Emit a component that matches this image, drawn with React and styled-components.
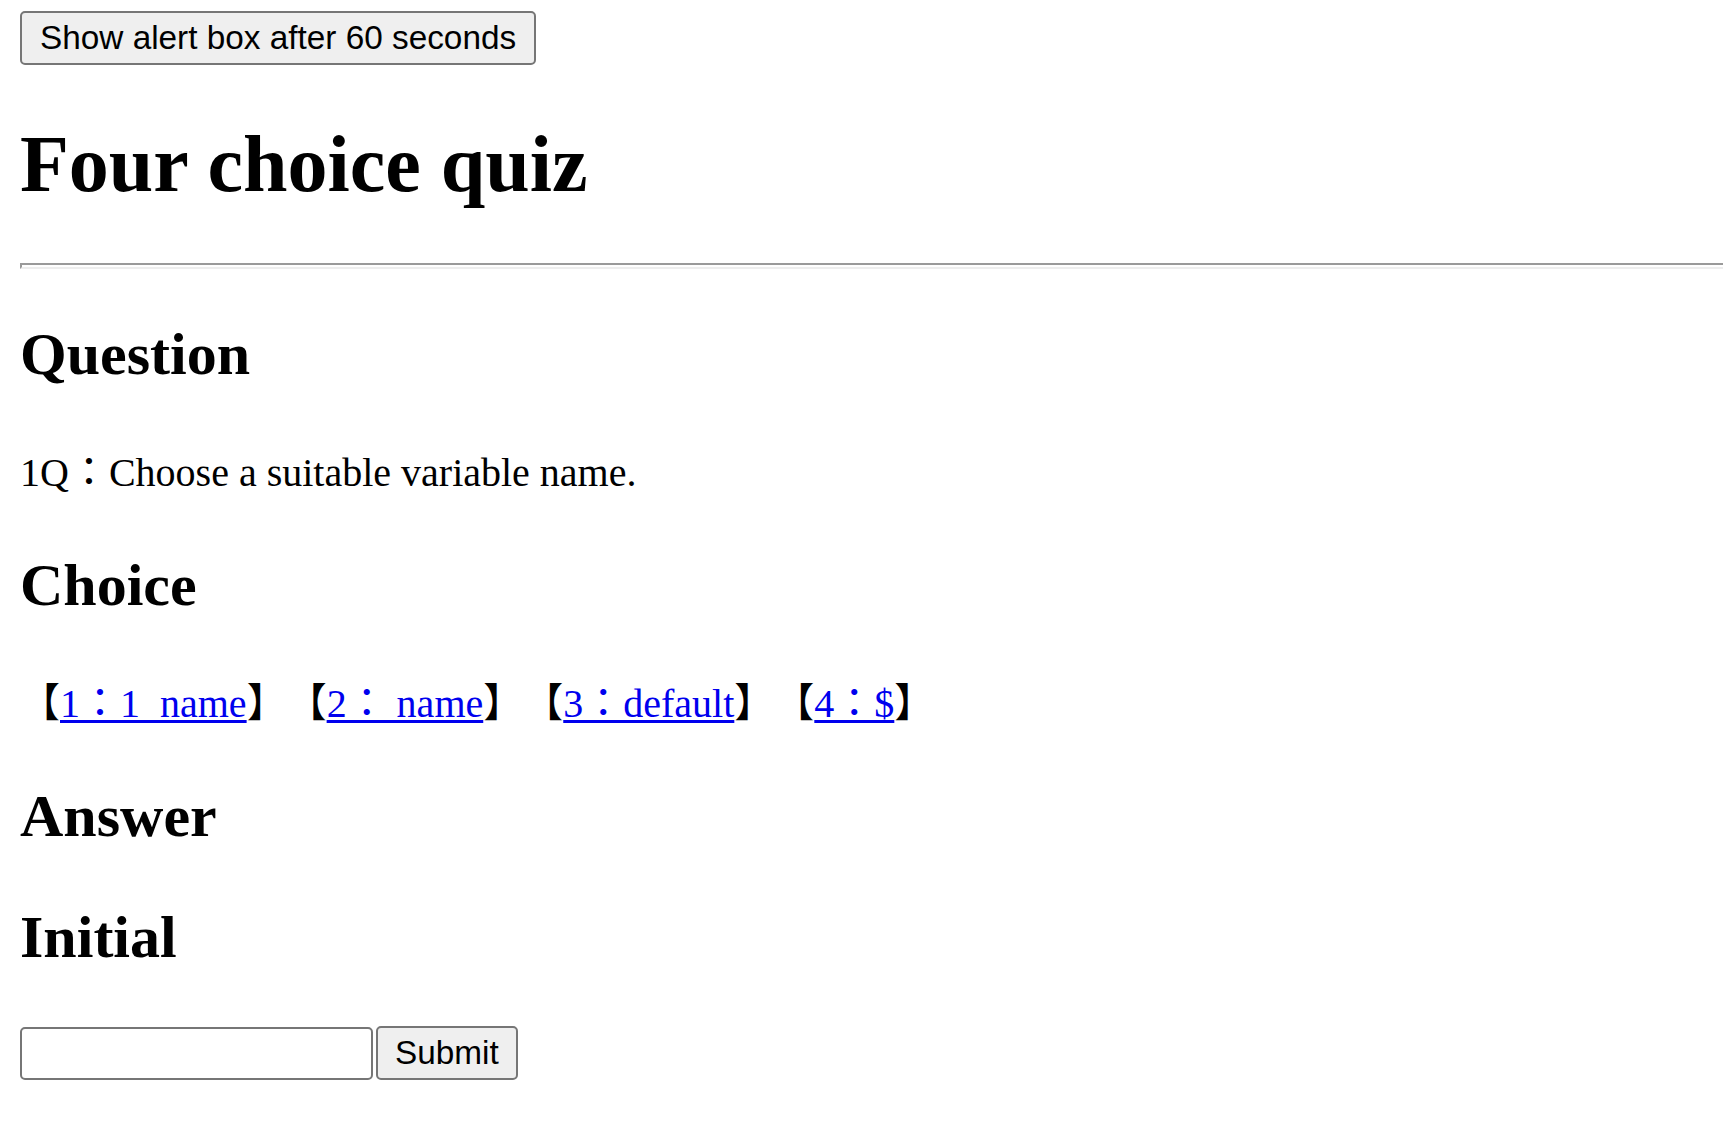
import * as React from "react"
import styled, { createGlobalStyle } from "styled-components"

const choices = [
  { id: 1, label: "1：1_name" },
  { id: 2, label: "2： name" },
  { id: 3, label: "3：default" },
  { id: 4, label: "4：$" },
]

const GlobalStyle = createGlobalStyle`
  html, body {
    margin: 0;
    padding: 0;
    background: #ffffff;
  }
  body {
    font-family: "Liberation Serif", "Noto Sans CJK JP", serif;
    color: #000000;
  }
`

const App = () => {
  const [initial, setInitial] = React.useState("")
  return (
    <>
      <GlobalStyle />
      <StPage>
        <StButton type="button" $pad={18}>
          Show alert box after 60 seconds
        </StButton>
        <StTitle>Four choice quiz</StTitle>
        <StRule />
        <StHeading>Question</StHeading>
        <StText>1Q：Choose a suitable variable name.</StText>
        <StHeading>Choice</StHeading>
        <StText>
          {choices.map(({ id, label }) => (
            <React.Fragment key={id}>
              【<StLink href={`#choice-${id}`}>{label}</StLink>】
            </React.Fragment>
          ))}
        </StText>
        <StHeading>Answer</StHeading>
        <StHeading>Initial</StHeading>
        <StForm onSubmit={e => e.preventDefault()}>
          <StInput
            type="text"
            value={initial}
            onChange={e => setInitial(e.target.value)}
          />
          <StButton type="submit" $pad={17}>
            Submit
          </StButton>
        </StForm>
      </StPage>
    </>
  )
}
export default App

const StPage = styled.div`
  padding: 11px 0 40px 20px;
`
const StButton = styled.button`
  height: 54px;
  margin: 0;
  padding: 0 ${props => props.$pad}px;
  font-family: "Liberation Sans", Arial, sans-serif;
  font-size: 33.33px;
  color: #000000;
  background-color: #efefef;
  border: 2px solid #767676;
  border-radius: 5px;
`
const StTitle = styled.h1`
  font-size: 80px;
  font-weight: bold;
  margin: 53.6px 0;
`
const StRule = styled.hr`
  height: 2px;
  margin: 20px 0;
  border-style: solid;
  border-width: 2px 0 2px 2px;
  border-color: #9a9a9a #eeeeee #eeeeee #9a9a9a;
`
const StHeading = styled.h2`
  font-size: 60px;
  font-weight: bold;
  line-height: 71px;
  margin: 49.8px 0;
`
const StText = styled.p`
  font-size: 40px;
  margin: 40px 0 52.4px;
  text-spacing-trim: space-all;
`
const StLink = styled.a`
  color: #0000ee;
  text-decoration: underline;
  text-decoration-thickness: 3px;
  text-underline-offset: 3px;
`
const StForm = styled.form`
  display: flex;
  align-items: center;
  gap: 3px;
  margin-top: 53px;
`
const StInput = styled.input`
  width: 353px;
  height: 53px;
  box-sizing: border-box;
  margin: 0;
  padding: 2px 5px;
  font-family: "Liberation Sans", Arial, sans-serif;
  font-size: 33.33px;
  border: 2px solid #767676;
  border-radius: 5px;
`
